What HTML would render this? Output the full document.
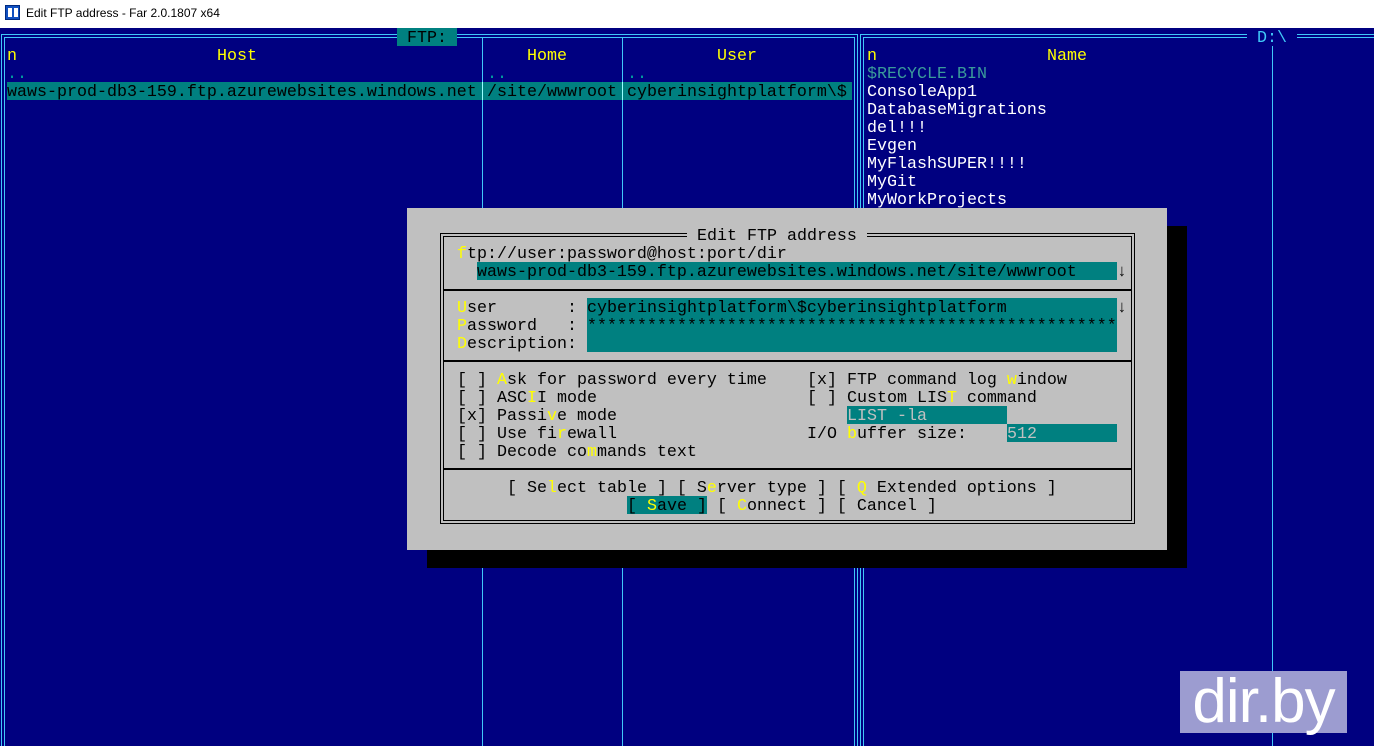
<!DOCTYPE html>
<html><head><meta charset="utf-8"><style>
*{margin:0;padding:0;box-sizing:border-box}
html{width:1374px;height:746px;overflow:hidden}
body{width:1374px;height:746px;overflow:hidden;background:#000080;position:relative;font-family:"Liberation Mono","DejaVu Sans Mono",monospace;font-size:16.67px;line-height:18px}
.t{position:absolute;white-space:pre;height:18px;padding-top:2px;line-height:18px}
.y{color:#ffff00}
.w{color:#fff}
.k{color:#000}
.c{color:#00a0a0}
.tl{background:#008080}
.ln{position:absolute;background:#40c8f8}
</style></head><body>
<div style="position:absolute;left:0;top:0;width:1374px;height:28px;background:#fff;font-family:'Liberation Sans',sans-serif;font-size:12px;line-height:28px;color:#000">
 <div style="position:absolute;left:5px;top:5px;width:15px;height:15px;background:#1050c0;border:1px solid #002a80"><div style="position:absolute;left:2px;top:2px;width:4px;height:9px;background:#fff"></div><div style="position:absolute;left:8px;top:2px;width:4px;height:9px;background:#fff"></div></div>
 <span style="position:absolute;left:26px;top:-1px">Edit FTP address - Far 2.0.1807 x64</span>
</div>
<!-- panels -->
<div style="position:absolute;left:1px;top:34px;width:857px;height:716px;border:4px double #40c8f8;border-bottom:none"></div>
<div style="position:absolute;left:860px;top:34px;width:600px;height:716px;border:4px double #40c8f8;border-bottom:none"></div>
<div class="ln" style="left:482px;top:38px;width:1px;height:708px"></div>
<div class="ln" style="left:622px;top:38px;width:1px;height:708px"></div>
<div class="ln" style="left:1272px;top:38px;width:1px;height:708px"></div>
<div class="t k" style="left:397px;top:28px;background:#008080"> FTP: </div>
<div class="t" style="left:1247px;top:28px;background:#000080;color:#40c8f8"> D:\ </div>
<div class="t y" style="left:7px;top:46px">n</div>
<div class="t y" style="left:217px;top:46px">Host</div>
<div class="t y" style="left:527px;top:46px">Home</div>
<div class="t y" style="left:717px;top:46px">User</div>
<div class="t c" style="left:7px;top:64px">..</div>
<div class="t c" style="left:487px;top:64px">..</div>
<div class="t c" style="left:627px;top:64px">..</div>
<div style="position:absolute;left:7px;top:82px;width:845px;height:18px;background:#008080"></div>
<div class="t k" style="left:7px;top:82px">waws-prod-db3-159.ftp.azurewebsites.windows.net</div>
<div class="ln" style="left:482px;top:82px;width:1px;height:18px;background:#9ff"></div>
<div class="ln" style="left:622px;top:82px;width:1px;height:18px;background:#9ff"></div>
<div class="t k" style="left:487px;top:82px">/site/wwwroot</div>
<div class="t k" style="left:627px;top:82px">cyberinsightplatform\$</div>
<div class="t y" style="left:867px;top:46px">n</div>
<div class="t y" style="left:1047px;top:46px">Name</div>
<div class="t" style="left:867px;top:64px;color:#3a9a9a">$RECYCLE.BIN</div>
<div class="t w" style="left:867px;top:82px">ConsoleApp1</div>
<div class="t w" style="left:867px;top:100px">DatabaseMigrations</div>
<div class="t w" style="left:867px;top:118px">del!!!</div>
<div class="t w" style="left:867px;top:136px">Evgen</div>
<div class="t w" style="left:867px;top:154px">MyFlashSUPER!!!!</div>
<div class="t w" style="left:867px;top:172px">MyGit</div>
<div class="t w" style="left:867px;top:190px">MyWorkProjects</div>
<!-- dialog -->
<div style="position:absolute;left:427px;top:226px;width:760px;height:342px;background:#000"></div>
<div style="position:absolute;left:407px;top:208px;width:760px;height:342px;background:#c0c0c0"></div>
<div style="position:absolute;left:440px;top:233px;width:695px;height:291px;border:4px double #000"></div>
<div style="position:absolute;left:444px;top:289px;width:687px;height:2px;background:#000"></div>
<div style="position:absolute;left:444px;top:360px;width:687px;height:2px;background:#000"></div>
<div style="position:absolute;left:444px;top:468px;width:687px;height:2px;background:#000"></div>
<div class="t k" style="left:687px;top:226px;background:#c0c0c0"> Edit FTP address </div>
<div class="t k" style="left:457px;top:244px"><span class="y">f</span>tp://user:password@host:port/dir</div>
<div class="t k tl" style="left:477px;top:262px;width:640px">waws-prod-db3-159.ftp.azurewebsites.windows.net/site/wwwroot</div>
<div class="t k" style="left:1117px;top:262px">↓</div>
<div class="t k" style="left:457px;top:298px"><span class="y">U</span>ser       :</div>
<div class="t k" style="left:457px;top:316px"><span class="y">P</span>assword   :</div>
<div class="t k" style="left:457px;top:334px"><span class="y">D</span>escription:</div>
<div class="tl" style="position:absolute;left:587px;top:298px;width:530px;height:54px"></div>
<div class="t k" style="left:587px;top:298px">cyberinsightplatform\$cyberinsightplatform</div>
<div class="t k" style="left:1117px;top:298px">↓</div>
<div class="t k" style="left:587px;top:316px">*****************************************************</div>
<div class="t k" style="left:457px;top:370px">[ ] <span class="y">A</span>sk for password every time</div>
<div class="t k" style="left:457px;top:388px">[ ] ASC<span class="y">I</span>I mode</div>
<div class="t k" style="left:457px;top:406px">[x] Passi<span class="y">v</span>e mode</div>
<div class="t k" style="left:457px;top:424px">[ ] Use fi<span class="y">r</span>ewall</div>
<div class="t k" style="left:457px;top:442px">[ ] Decode co<span class="y">m</span>mands text</div>
<div class="t k" style="left:807px;top:370px">[x] FTP command log <span class="y">w</span>indow</div>
<div class="t k" style="left:807px;top:388px">[ ] Custom LIS<span class="y">T</span> command</div>
<div class="t tl" style="left:847px;top:406px;width:160px;color:#c0c0c0">LIST -la</div>
<div class="t k" style="left:807px;top:424px">I/O <span class="y">b</span>uffer size:</div>
<div class="t tl" style="left:1007px;top:424px;width:110px;color:#c0c0c0">512</div>
<div class="t k" style="left:507px;top:478px">[ Se<span class="y">l</span>ect table ] [ S<span class="y">e</span>rver type ] [ <span class="y">Q</span> Extended options ]</div>
<div style="position:absolute;left:627px;top:496px;width:80px;height:18px;background:#008080"></div>
<div class="t k" style="left:627px;top:496px">[ <span class="y">S</span>ave ] [ <span class="y">C</span>onnect ] [ Cancel ]</div>
<!-- watermark -->
<div style="position:absolute;left:1180px;top:671px;width:167px;height:62px;background:#9c9cd0;color:#fff;font-family:'Liberation Sans',sans-serif;font-size:62px;line-height:62px;text-align:center;letter-spacing:-1px">dir.by</div>
</body></html>
